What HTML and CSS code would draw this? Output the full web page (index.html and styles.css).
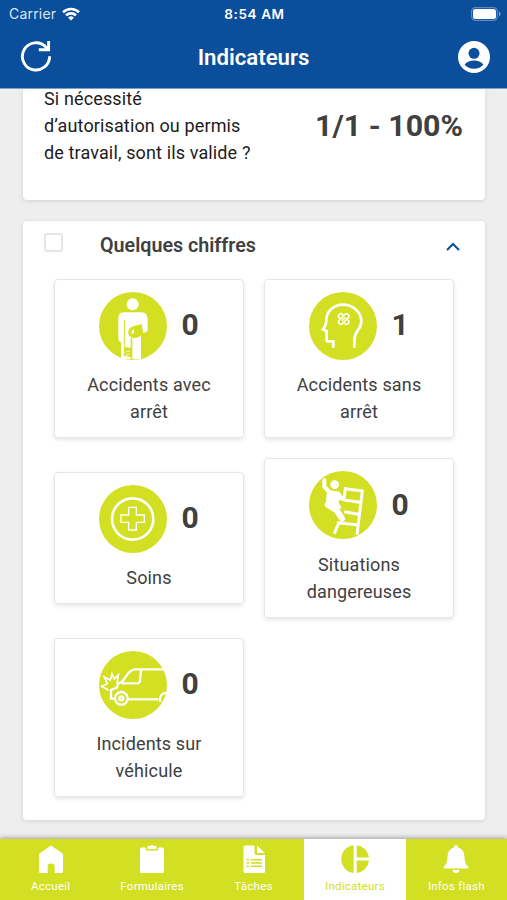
FILE: index.html
```html
<!DOCTYPE html>
<html lang="fr">
<head>
    <meta charset="UTF-8">
    <title>Indicateurs</title>
    <link rel="stylesheet" href="styles.css">
</head>
<body>
    <header class="header">
        <div class="status-bar">
            <div class="carrier">
                <span>Carrier</span>
                <svg width="18" height="14" viewBox="0 0 18 14" fill="none" stroke="#fff" stroke-width="2.6">
                    <path d="M1 5.2a11.5 11.5 0 0 1 16 0"/>
                    <path d="M4 8.4a7.2 7.2 0 0 1 10 0"/>
                    <path d="M9 13.6l-2.9-2.9a4.2 4.2 0 0 1 5.8 0z" fill="#fff" stroke="none"/>
                </svg>
            </div>
            <span class="time">8:54 AM</span>
            <div class="battery">
                <svg width="30" height="14" viewBox="0 0 30 14">
                    <rect x=".6" y=".6" width="25.8" height="12.8" rx="4" fill="none" stroke="#5f88bd" stroke-width="1.2"/>
                    <rect x="2" y="2" width="23" height="10" rx="2.5" fill="#fff"/>
                    <path d="M28 4.6v4.8q1.6-.8 1.6-2.4T28 4.6z" fill="#7f9fca"/>
                </svg>
            </div>
        </div>
        <div class="title-bar">
            <svg class="refresh" width="32" height="32" viewBox="0 0 32 32" fill="none" stroke="#fff" stroke-width="2.9">
                <path d="M29.6 16.3A13.6 13.6 0 1 1 26 7.2L28 9.4"/>
                <path d="M18.8 9.7H28.6V1"/>
            </svg>
            <h1>Indicateurs</h1>
            <svg class="profile" width="32" height="32" viewBox="0 0 32 32">
                <circle cx="16" cy="16" r="16" fill="#fff"/>
                <circle cx="16" cy="12.3" r="5.5" fill="#0b4e9b"/>
                <path d="M6.6 23.4Q10 19.4 16 19.4T25.4 23.4Q21.8 27.8 16 27.8T6.6 23.4z" fill="#0b4e9b"/>
            </svg>
        </div>
    </header>

    <main class="content">
        <section class="card question">
            <p>Si nécessité d’autorisation ou permis de travail, sont ils valide ?</p>
            <strong>1/1 - 100%</strong>
        </section>

        <section class="card figures">
            <div class="card-head">
                <span class="checkbox"></span>
                <h2>Quelques chiffres</h2>
                <svg width="14" height="9" viewBox="0 0 14 9" fill="none" stroke="#0b4e9b" stroke-width="2">
                    <path d="M1 8l6-6 6 6"/>
                </svg>
            </div>

            <div class="tiles">
                <div class="tile">
                    <div class="tile-top">
                        <svg class="icon" viewBox="0 0 204 204">
                            <circle cx="102" cy="102" r="102" fill="#d3df22"/>
                            <circle cx="101" cy="37" r="18" fill="#fff"/>
                            <path d="M74 61H127Q146 61 146 83V113Q146 119 139 121L126 126V202H100V137H95V202H66V151Q58 149 58 141V80Q58 61 74 61z" fill="#fff"/>
                            <path d="M76 84V193" stroke="#d3df22" stroke-width="3"/>
                            <path d="M103 103L128 96 133 125Q119 139 103 138 86 133 88 119 90 107 103 103z" fill="#d3df22"/>
                            <path d="M104 111Q94 121 99 127 107 124 104 111z" fill="#fff"/>
                            <path d="M78 165l20 3v28l-20-5z" fill="#d3df22"/>
                            <path d="M80 181l13-5M80 190l13-5" stroke="#fff" stroke-width="2.5"/>
                        </svg>
                        <span class="count">0</span>
                    </div>
                    <p>Accidents avec arrêt</p>
                </div>

                <div class="tile">
                    <div class="tile-top">
                        <svg class="icon" viewBox="0 0 204 204" fill="none" stroke="#fff" stroke-width="8">
                            <circle cx="102" cy="102" r="102" fill="#d3df22" stroke="none"/>
                            <path d="M73 167V148H56Q53 148 53 143V117L42 112Q52 98 52 86C52 57 75 38 102 38S157 58 157 88C157 116 136 113 136 144V167"/>
                            <g stroke-width="4.5" transform="translate(104 81) rotate(45)">
                                <path d="M-7-7V-13Q-7-19 0-19T7-13V-7H13Q19-7 19 0T13 7H7V13Q7 19 0 19T-7 13V7H-13Q-19 7-19 0T-13-7z"/>
                                <path d="M-7-7V7M7-7V7M0-7V7"/>
                            </g>
                        </svg>
                        <span class="count">1</span>
                    </div>
                    <p>Accidents sans arrêt</p>
                </div>

                <div class="tile">
                    <div class="tile-top">
                        <svg class="icon" viewBox="0 0 204 204" fill="none" stroke="#fff">
                            <circle cx="102" cy="102" r="102" fill="#d3df22" stroke="none"/>
                            <circle cx="101" cy="102" r="62" stroke-width="8"/>
                            <path d="M89 67H112V90H136V112H112V135H89V112H66V90H89z" stroke-width="4"/>
                        </svg>
                        <span class="count">0</span>
                    </div>
                    <p>Soins</p>
                </div>

                <div class="tile">
                    <div class="tile-top">
                        <svg class="icon" viewBox="0 0 204 204" fill="none" stroke="#fff" stroke-width="9">
                            <circle cx="102" cy="102" r="102" fill="#d3df22" stroke="none"/>
                            <circle cx="77" cy="41" r="13" fill="#fff" stroke="none"/>
                            <path d="M46 27V47L62 64" stroke-width="12" stroke-linecap="round"/>
                            <path d="M54 56L92 62 100 75 88 92 98 112 82 114 50 106z" fill="#fff" stroke="none"/>
                            <path d="M56 101L84 119 99 143" stroke-width="18" stroke-linecap="round"/>
                            <path d="M86 68L106 85M84 78L104 88" stroke-width="7"/>
                            <path d="M104 89L109 53 160 60 144 191M106 87L152 94M106 122L148 130M84 155L143 161M90 154L76 188"/>
                        </svg>
                        <span class="count">0</span>
                    </div>
                    <p>Situations dangereuses</p>
                </div>

                <div class="tile">
                    <div class="tile-top">
                        <svg class="icon" viewBox="0 0 204 204" fill="none" stroke="#fff" stroke-width="7">
                            <circle cx="102" cy="102" r="102" fill="#d3df22" stroke="none"/>
                            <path d="M194 55H111Q96 55 87 68L69 93 57 98 54 110 36 117V143H47"/>
                            <path d="M126 57L123 90Q122 96 115 97H69"/>
                            <path d="M85 145H178"/>
                            <circle cx="67" cy="142" r="19"/>
                            <circle cx="67" cy="142" r="6"/>
                            <path d="M202 125Q180 127 183 153"/>
                            <path d="M29 118L8 106 25 98 16 78 34 87 39 69 46 84 58 72 54 97" stroke-width="5"/>
                        </svg>
                        <span class="count">0</span>
                    </div>
                    <p>Incidents sur véhicule</p>
                </div>
            </div>
        </section>
    </main>

    <nav class="tabs">
        <a class="tab">
            <svg width="30" height="30" viewBox="0 0 30 30" fill="#fff">
                <path d="M15 1.5L27 9.8V27.5Q27 29 25.5 29H18.7V22.5Q18.7 19.5 15 19.5T11.7 22.5V29H4.5Q3 29 3 27.5V9.8z"/>
            </svg>
            <span>Accueil</span>
        </a>
        <a class="tab">
            <svg width="30" height="30" viewBox="0 0 30 30" fill="#fff">
                <path d="M4.500 3.500H9V6.500H21V3.500H25.500Q27 3.500 27 5V27.500Q27 29 25.500 29H4.500Q3 29 3 27.500V5Q3 3.500 4.500 3.500z"/>
                <path d="M10.500 2H13Q15 .2 17 2H19.500V5H10.500z"/>
            </svg>
            <span>Formulaires</span>
        </a>
        <a class="tab">
            <svg width="30" height="30" viewBox="0 0 30 30">
                <path d="M6 1.500H15.500V8.500Q15.500 11 18 11H26V27.500Q26 29 24.500 29H6Q4.500 29 4.500 27.500V3Q4.500 1.500 6 1.500zM18 1.500L26 9H18z" fill="#fff"/>
                <path d="M7.500 15.700H10M12 15.700H23M7.500 19H10M12 19H23M7.500 22.300H10M12 22.300H23" stroke="#d3df22" stroke-width="1.500"/>
            </svg>
            <span>Tâches</span>
        </a>
        <a class="tab active">
            <svg width="30" height="30" viewBox="0 0 30 30" fill="#d3df22">
                <path d="M13.600 1.200V29A14 14 0 0 1 13.600 1.200zM16.700 1.200A14 14 0 0 1 29 13.500H16.700zM16.700 16.500H29A14 14 0 0 1 16.700 29z"/>
            </svg>
            <span>Indicateurs</span>
        </a>
        <a class="tab">
            <svg width="30" height="30" viewBox="0 0 30 30" fill="#fff">
                <path d="M15 1Q17 1 17 3.500 23.500 5 23.500 13 23.500 20 27.500 23V24.500H2.500V23Q6.500 20 6.500 13 6.500 5 13 3.500 13 1 15 1zM11.500 26H18.500Q17.800 29 15 29T11.500 26z"/>
            </svg>
            <span>Infos flash</span>
        </a>
    </nav>
</body>
</html>
```

FILE: styles.css
```css
* {
  box-sizing: border-box;
}

body {
  margin: 0;
  height: 900px;
  display: flex;
  flex-direction: column;
  overflow: hidden;
  font-family: Roboto, Arial, sans-serif;
  background: #eee;
  color: #404040;
}

h1, h2, p {
  margin: 0;
}

svg {
  display: block;
}

/* header */
.header {
  flex: none;
  height: 89px;
  background: #0b4e9b;
  border-bottom: 1px solid #7fa3cf;
  color: #fff;
}

.status-bar {
  display: grid;
  grid-template-columns: 1fr auto 1fr;
  align-items: center;
  height: 27px;
  padding: 0 7px 0 9px;
  font-family: Inter, sans-serif;
  font-size: 14px;
}

.carrier {
  display: flex;
  align-items: center;
  gap: 6px;
  letter-spacing: 0.2px;
  color: #dbe5f1;
}

.time {
  font-weight: 600;
  font-size: 13.5px;
  letter-spacing: 0.6px;
}

.battery {
  justify-self: end;
  margin-right: -1px;
}

.title-bar {
  display: flex;
  align-items: center;
  justify-content: space-between;
  height: 59px;
  padding: 0 17px 0 20px;
}

.refresh {
  margin-top: -2px;
}

h1 {
  margin-right: 3px;
  font-size: 22.2px;
  font-weight: 600;
}

/* cards */
.content {
  flex: 1;
  min-height: 0;
  padding: 0 22px 0 23px;
}

.card {
  background: #fff;
  border-radius: 4px;
  box-shadow: 0 1px 4px rgba(0, 0, 0, 0.12);
}

.question {
  display: flex;
  justify-content: space-between;
  height: 111px;
  padding: 0 22px 0 21px;
  border-radius: 0 0 4px 4px;
}

.question p {
  width: 212px;
  margin-top: -4px;
  font-size: 18px;
  line-height: 27px;
  letter-spacing: 0.13px;
  color: #1c1c1c;
}

.question strong {
  margin-top: 19px;
  font-size: 30.4px;
  line-height: 36px;
  white-space: nowrap;
}

.figures {
  height: 599px;
  margin-top: 21px;
}

.card-head {
  display: flex;
  align-items: center;
  height: 47px;
  padding: 0 25px 0 21px;
}

.card-head h2 {
  flex: 1;
  margin-top: 1px;
  margin-left: 37px;
  font-size: 19.7px;
  font-weight: 600;
}

.card-head svg {
  margin-top: 4px;
}

.checkbox {
  width: 19px;
  height: 19px;
  margin-top: -4px;
  border: 2px solid #e6e6e6;
  border-radius: 3px;
}

.tiles {
  display: grid;
  grid-template-columns: 190px 190px;
  gap: 20px;
  align-items: center;
  padding: 10.5px 31px 0;
}

.tile {
  padding: 12px 20px;
  border: 1px solid #e6e6e6;
  border-radius: 4px;
  box-shadow: 0 2px 4px rgba(0, 0, 0, 0.1);
  text-align: center;
}

.tile-top {
  display: flex;
  align-items: center;
  justify-content: center;
  gap: 14px;
  margin-bottom: 11.5px;
}

.icon {
  width: 68px;
  height: 68px;
}

.count {
  margin-top: -2px;
  font-size: 30px;
  font-weight: bold;
}

.tile p {
  font-size: 18px;
  line-height: 27px;
  letter-spacing: 0.15px;
}

/* bottom navigation */
.tabs {
  flex: none;
  display: flex;
  height: 61px;
  background: #d3df22;
  box-shadow: 0 -1px 5px rgba(0, 0, 0, 0.35);
}

.tab {
  flex: 1;
  display: flex;
  flex-direction: column;
  align-items: center;
  gap: 4px;
  padding-top: 5px;
  font-size: 11.5px;
  line-height: 16px;
  letter-spacing: 0.25px;
  color: #fff;
}

.tab.active {
  background: #fff;
  color: #d3df22;
}
```
